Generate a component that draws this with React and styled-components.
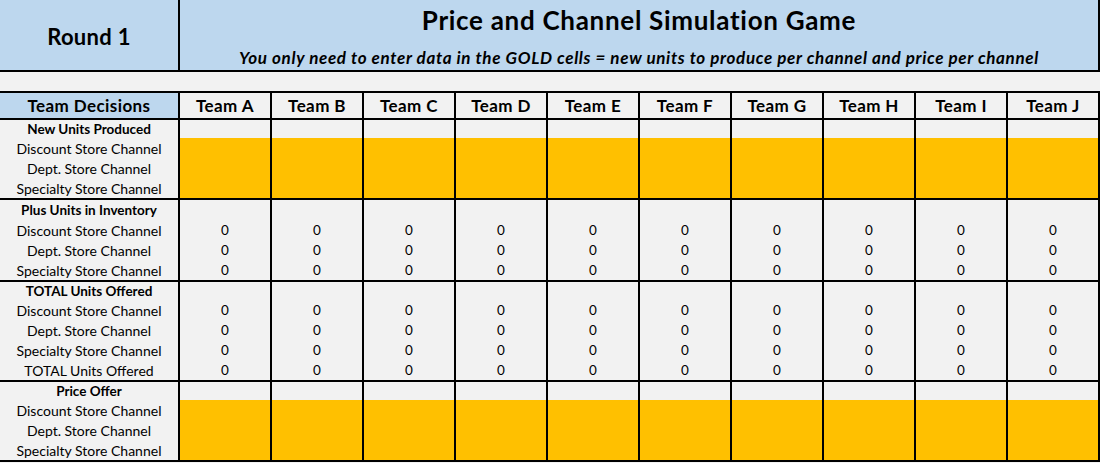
import React from 'react'
import styled, { createGlobalStyle } from 'styled-components'

const GlobalStyle = createGlobalStyle`
  html, body {
    margin: 0;
    padding: 0;
    background: #f2f2f2;
  }
  body {
    font-family: Lato, "Liberation Sans", sans-serif;
    color: #000;
  }
`

const BLUE = '#bdd7ee'
const GOLD = '#ffc000'
const LINE = '2px solid #000'

const TEAMS = ['A', 'B', 'C', 'D', 'E', 'F', 'G', 'H', 'I', 'J']

const SECTIONS = [
  {
    title: 'New Units Produced',
    head: 18,
    gold: true,
    rows: ['Discount Store Channel', 'Dept. Store Channel', 'Specialty Store Channel'],
  },
  {
    title: 'Plus Units in Inventory',
    head: 20,
    rows: ['Discount Store Channel', 'Dept. Store Channel', 'Specialty Store Channel'],
  },
  {
    title: 'TOTAL Units Offered',
    head: 18,
    rows: ['Discount Store Channel', 'Dept. Store Channel', 'Specialty Store Channel', 'TOTAL Units Offered'],
  },
  {
    title: 'Price Offer',
    head: 18,
    gold: true,
    rows: ['Discount Store Channel', 'Dept. Store Channel', 'Specialty Store Channel'],
  },
]

const Page = styled.div`
  width: 1100px;
`

const Banner = styled.div`
  display: flex;
  height: 70px;
  background: ${BLUE};
  border-bottom: ${LINE};
`

const RoundCell = styled.div`
  width: 178px;
  border-right: ${LINE};
  display: flex;
  align-items: center;
  justify-content: center;
  font-size: 22px;
  letter-spacing: 0.3px;
  font-weight: 700;
  padding-top: 2px;
`

const TitleCell = styled.div`
  width: 918px;
  border-right: ${LINE};
  display: flex;
  flex-direction: column;
  align-items: center;
`

const Title = styled.div`
  font-size: 26px;
  letter-spacing: 0.7px;
  font-weight: 700;
  line-height: 30px;
  margin-top: 5px;
`

const Subtitle = styled.div`
  font-size: 17px;
  letter-spacing: 0.65px;
  font-weight: 700;
  font-style: italic;
  line-height: 20px;
  margin-top: 13px;
`

const Spacer = styled.div`
  height: 19px;
`

const Table = styled.div`
  border-top: ${LINE};
`

const Row = styled.div`
  display: flex;
  height: ${p => p.$h || 20}px;
`

const Section = styled.div`
  border-bottom: ${LINE};
`

const HeadRow = styled(Row)`
  border-bottom: ${LINE};
`

const Label = styled.div`
  width: 178px;
  flex: none;
  border-right: ${LINE};
  background: ${p => (p.$blue ? BLUE : 'transparent')};
  display: flex;
  align-items: center;
  justify-content: center;
  font-size: ${p => (p.$big ? 17 : p.$bold ? 13.5 : 14)}px;
  letter-spacing: ${p => (p.$big ? 0.4 : 0)}px;
  font-weight: ${p => (p.$bold ? 700 : 400)};
  white-space: nowrap;
`

const Cell = styled.div`
  width: 90px;
  flex: none;
  border-right: ${LINE};
  background: ${p => (p.$gold ? GOLD : 'transparent')};
  display: flex;
  align-items: center;
  justify-content: center;
  font-size: ${p => (p.$big ? 17 : 13.5)}px;
  letter-spacing: ${p => (p.$big ? 0.4 : 0)}px;
  font-weight: ${p => (p.$bold ? 700 : 400)};
`

function App() {
  return (
    <Page>
      <GlobalStyle />
      <Banner>
        <RoundCell>Round 1</RoundCell>
        <TitleCell>
          <Title>Price and Channel Simulation Game</Title>
          <Subtitle>
            You only need to enter data in the GOLD cells = new units to produce per channel and price per channel
          </Subtitle>
        </TitleCell>
      </Banner>
      <Spacer />
      <Table>
        <HeadRow $h={25}>
          <Label $blue $bold $big>Team Decisions</Label>
          {TEAMS.map(t => (
            <Cell key={t} $bold $big>Team {t}</Cell>
          ))}
        </HeadRow>
        {SECTIONS.map(s => (
          <Section key={s.title}>
            <Row $h={s.head}>
              <Label $bold>{s.title}</Label>
              {TEAMS.map(t => (
                <Cell key={t} />
              ))}
            </Row>
            {s.rows.map((r, i) => (
              <Row key={i}>
                <Label>{r}</Label>
                {TEAMS.map(t => (
                  <Cell key={t} $gold={s.gold}>{s.gold ? '' : '0'}</Cell>
                ))}
              </Row>
            ))}
          </Section>
        ))}
      </Table>
    </Page>
  )
}

export default App
